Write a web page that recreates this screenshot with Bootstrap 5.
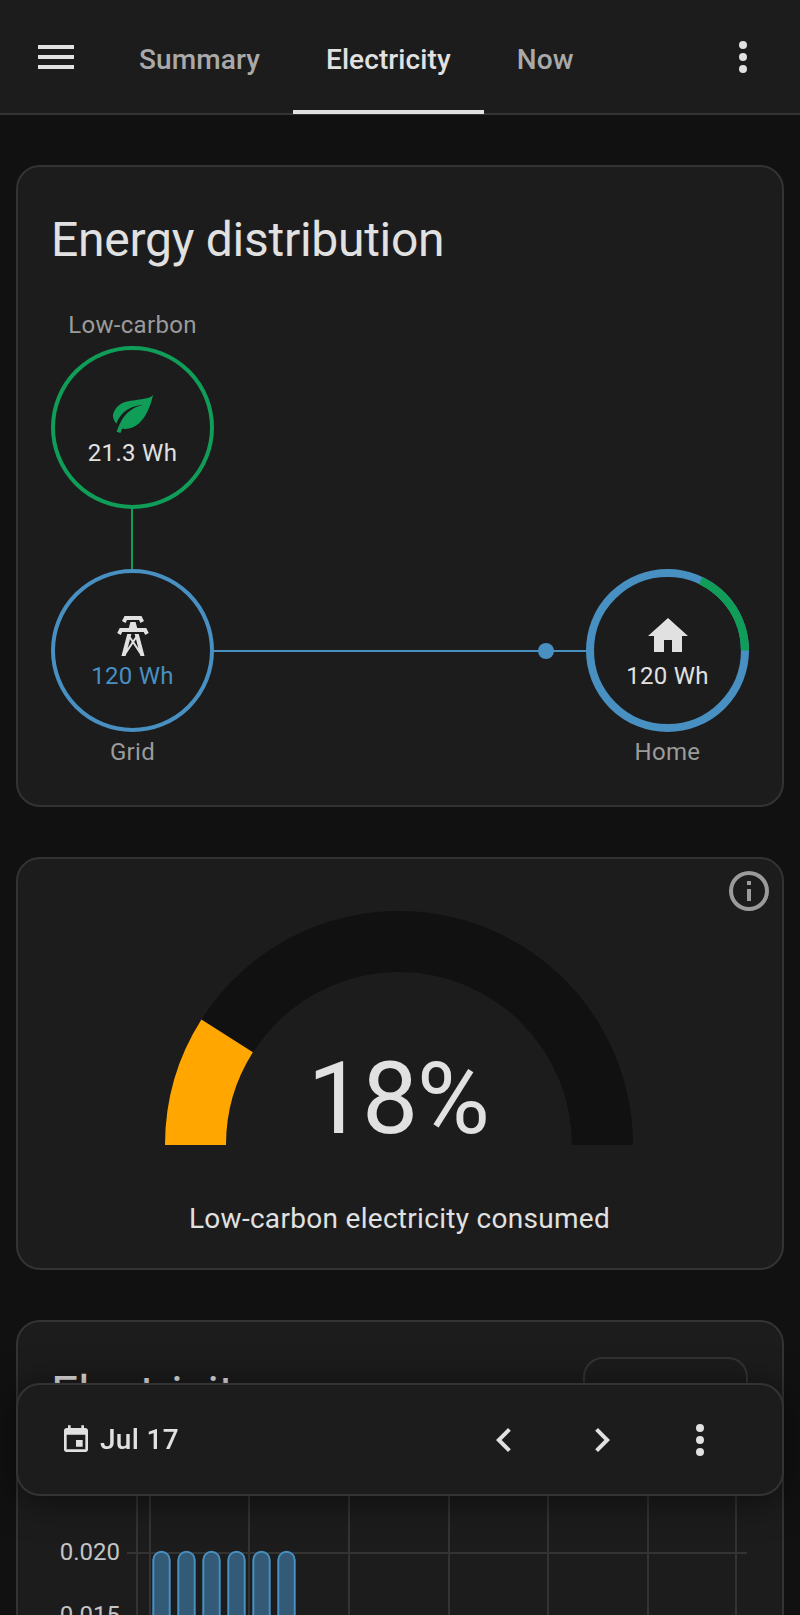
<!DOCTYPE html>
<html lang="en">
<head>
    <meta charset="UTF-8">
    <title>Energy</title>
    <link href="https://cdn.jsdelivr.net/npm/bootstrap@5.3.3/dist/css/bootstrap.min.css" rel="stylesheet">
    <script src="https://cdn.jsdelivr.net/npm/bootstrap@5.3.3/dist/js/bootstrap.bundle.min.js"></script>
    <style>
        html, body {
            height: 1615px;
            overflow: hidden;
        }
        body {
            background: #111111;
            color: #e1e1e1;
            font-family: Roboto, "Liberation Sans", sans-serif;
            font-size: 24px;
            letter-spacing: 0.3px;
        }
        .top-bar {
            height: 115px;
            background: #1c1c1c;
            border-bottom: 2px solid #333333;
        }
        .icon-btn {
            width: 48px;
            height: 48px;
            padding: 0;
            border: 0;
            flex: none;
            color: #e1e1e1;
            background: none;
        }
        .icon-btn svg, .ha-icon {
            display: block;
            width: 48px;
            height: 48px;
            fill: currentColor;
        }
        .menu-btn { margin-left: 32px; margin-right: 26px; }
        .more-btn { margin-right: 33px; }
        .tab-link {
            padding: 10px 33px 0;
            height: 115px;
            color: #a9a9a9;
            font-size: 28px;
            font-weight: 500;
            letter-spacing: 0.1px;
            border-bottom: 4px solid transparent;
        }
        .tab-link.is-active {
            color: #e1e1e1;
            border-bottom-color: #e1e1e1;
        }
        .page-body {
            padding: 50px 16px 0;
            gap: 50px;
        }
        .ha-card {
            background: #1c1c1c;
            border: 2px solid #333333;
            border-radius: 24px;
            color: #e1e1e1;
        }
        .card-heading {
            margin: 0;
            font-size: 48px;
            font-weight: 400;
            line-height: 64px;
            letter-spacing: -0.27px;
        }
        .dist-card {
            height: 642px;
            padding: 41px 33px 0;
        }
        .dist-title { margin-bottom: 37px; }
        .node-col { width: 163px; }
        .node-label {
            height: 32px;
            line-height: 32px;
            color: #9b9b9b;
            text-align: center;
            white-space: nowrap;
        }
        .node {
            position: relative;
            width: 163px;
            height: 163px;
            flex: none;
            padding-top: 43px;
            border-radius: 50%;
            line-height: 32px;
        }
        .node-low { border: 4px solid #0f9d58; padding-top: 39px; margin-top: 5px; }
        .node-grid { border: 4px solid #488fc2; padding-top: 39px; }
        .leaf-ic { color: #0f9d58; }
        .grid-val { color: #488fc2; }
        .home-ring {
            position: absolute;
            left: 0;
            top: 0;
            width: 163px;
            height: 163px;
        }
        .low-link {
            width: 2px;
            height: 60px;
            margin-right: 1px;
            background: #0f9d58;
        }
        .grid-link {
            position: relative;
            height: 2px;
            background: #488fc2;
        }
        .flow-dot {
            position: absolute;
            left: 324px;
            top: -7px;
            width: 16px;
            height: 16px;
            border-radius: 50%;
            background: #488fc2;
        }
        .bottom-labels { margin-top: 4px; }
        .gauge-card {
            position: relative;
            height: 413px;
            padding-top: 52px;
        }
        .info-btn {
            position: absolute;
            top: 8px;
            right: 9px;
            color: #9b9b9b;
        }
        .gauge-svg {
            display: block;
            width: 468px;
            height: 264px;
            margin-left: 147px;
        }
        .gauge-value {
            font-size: 100px;
            font-weight: 400;
            letter-spacing: -1.5px;
            fill: #e1e1e1;
        }
        .gauge-name {
            margin-top: 24px;
            padding-right: 1px;
            font-size: 28px;
            line-height: 40px;
            text-align: center;
        }
        .chart-card {
            height: 500px;
            padding-top: 40px;
        }
        .chart-head { padding: 0 34px 0 33px; }
        .range-btn {
            width: 165px;
            height: 72px;
            margin-top: -5px;
            border: 2px solid #333333;
            border-radius: 20px;
            color: #e1e1e1;
            font-size: 28px;
            text-align: center;
            line-height: 74px;
        }
        .chart-svg {
            display: block;
            width: 764px;
            height: 300px;
            margin-top: 1px;
        }
        .grid-line { stroke: #333333; stroke-width: 2; }
        .bar-rect { fill: #335a76; stroke: #488fc2; stroke-width: 2; }
        .axis-text { font-size: 24px; letter-spacing: 0; fill: #c4c4c4; text-anchor: end; }
        .date-bar {
            position: fixed;
            left: 16px;
            right: 16px;
            top: 1383px;
            height: 113px;
            padding: 0 58px 0 42px;
            background: #1c1c1c;
            border: 2px solid #333333;
            border-radius: 24px;
            box-shadow: 0 4px 36px rgba(0, 0, 0, 0.55);
        }
        .date-icon {
            display: block;
            width: 32px;
            height: 32px;
            margin-right: 8px;
            fill: #e1e1e1;
        }
        .date-text {
            font-size: 28px;
            font-weight: 500;
        }
        .step-btn { margin-left: 50px; }
    </style>
</head>
<body>

<!-- 상단 탭 -->
<nav class="top-bar d-flex align-items-center">
    <button class="btn icon-btn menu-btn" aria-label="Menu">
        <svg viewBox="0 0 24 24"><path d="M3,6H21V8H3V6M3,11H21V13H3V11M3,16H21V18H3V16Z"/></svg>
    </button>
    <a class="nav-link tab-link d-flex align-items-center" href="#">Summary</a>
    <a class="nav-link tab-link is-active d-flex align-items-center" href="#">Electricity</a>
    <a class="nav-link tab-link d-flex align-items-center" href="#">Now</a>
    <button class="btn icon-btn more-btn ms-auto" aria-label="More">
        <svg viewBox="0 0 24 24"><path d="M12,16A2,2 0 0,1 14,18A2,2 0 0,1 12,20A2,2 0 0,1 10,18A2,2 0 0,1 12,16M12,10A2,2 0 0,1 14,12A2,2 0 0,1 12,14A2,2 0 0,1 10,12A2,2 0 0,1 12,10M12,4A2,2 0 0,1 14,6A2,2 0 0,1 12,8A2,2 0 0,1 10,6A2,2 0 0,1 12,4Z"/></svg>
    </button>
</nav>

<main class="page-body d-flex flex-column">

    <!-- Energy distribution -->
    <section class="card ha-card dist-card">
        <h2 class="card-heading dist-title">Energy distribution</h2>

        <div class="node-col d-flex flex-column align-items-center">
            <div class="node-label">Low-carbon</div>
            <div class="node node-low d-flex flex-column align-items-center">
                <svg class="ha-icon leaf-ic" viewBox="0 0 24 24"><path d="M17,8C8,10 5.9,16.17 3.82,21.34L5.71,22L6.66,19.7C7.14,19.87 7.64,20 8,20C19,20 22,3 22,3C21,5 14,5.25 9,6.25C4,7.25 2,11.5 2,13.5C2,15.5 3.75,17.25 3.75,17.25C7,8 17,8 17,8Z"/></svg>
                <span>21.3 Wh</span>
            </div>
            <div class="low-link"></div>
        </div>

        <div class="d-flex align-items-center">
            <div class="node node-grid d-flex flex-column align-items-center">
                <svg class="ha-icon" viewBox="0 0 24 24"><path d="M8.28,5.45L6.5,4.55L7.76,2H16.23L17.5,4.55L15.72,5.44L15,4H9L8.28,5.45M18.62,8H14.09L13.3,5H10.7L9.91,8H5.38L4.1,10.55L5.89,11.44L6.62,10H17.38L18.1,11.45L19.89,10.56L18.62,8M17.77,22H15.7L15.46,21.1L12,15.9L8.53,21.1L8.3,22H6.23L9.12,11H11.19L10.83,12.35L12,14.1L13.16,12.35L12.81,11H14.88L17.77,22M11.4,15L10.5,13.65L9.32,18.13L11.4,15M14.68,18.12L13.5,13.64L12.6,15L14.68,18.12Z"/></svg>
                <span class="grid-val">120 Wh</span>
            </div>
            <div class="grid-link flex-grow-1"><span class="flow-dot"></span></div>
            <div class="node d-flex flex-column align-items-center">
                <svg class="home-ring" viewBox="0 0 162 162" fill="none" stroke-width="8">
                    <circle cx="81" cy="81" r="77" stroke="#488fc2"/>
                    <path d="M114.15,11.5A77,77 0 0 1 158,81" stroke="#0f9d58"/>
                </svg>
                <svg class="ha-icon" viewBox="0 0 24 24"><path d="M10,20V14H14V20H19V12H22L12,3L2,12H5V20H10Z"/></svg>
                <span>120 Wh</span>
            </div>
        </div>

        <div class="bottom-labels d-flex justify-content-between">
            <div class="node-col node-label">Grid</div>
            <div class="node-col node-label">Home</div>
        </div>
    </section>

    <!-- 게이지 -->
    <section class="card ha-card gauge-card">
        <button class="btn icon-btn info-btn" aria-label="Info">
            <svg viewBox="0 0 24 24"><path d="M11,9H13V7H11M12,20C7.59,20 4,16.41 4,12C4,7.59 7.59,4 12,4C16.41,4 20,7.59 20,12C20,16.41 16.41,20 12,20M12,2A10,10 0 0,0 2,12A10,10 0 0,0 12,22A10,10 0 0,0 22,12A10,10 0 0,0 12,2M11,17H13V11H11V17Z"/></svg>
        </button>
        <svg class="gauge-svg" viewBox="-234 -234 468 264">
            <path d="M-234,0A234,234 0 0 1 234,0H173A173,173 0 0 0 -173,0Z" fill="#111111"/>
            <path d="M-234,0A234,234 0 0 1 -197.6,-125.4L-146.1,-92.7A173,173 0 0 0 -173,0Z" fill="#ffa600"/>
            <text class="gauge-value" x="-1" y="-12" text-anchor="middle">18%</text>
        </svg>
        <div class="gauge-name">Low-carbon electricity consumed</div>
    </section>

    <!-- Electricity 차트 -->
    <section class="card ha-card chart-card">
        <div class="chart-head d-flex justify-content-between align-items-start">
            <h2 class="card-heading">Electricity</h2>
            <div class="range-btn">Untitled</div>
        </div>
        <svg class="chart-svg" viewBox="18 1430 764 300">
            <line class="grid-line" x1="127" y1="1553" x2="747" y2="1553"/>
            <line class="grid-line" x1="127" y1="1616" x2="747" y2="1616"/>
            <line class="grid-line" x1="137" y1="1430" x2="137" y2="1730"/>
            <line class="grid-line" x1="150" y1="1430" x2="150" y2="1730"/>
            <line class="grid-line" x1="249" y1="1430" x2="249" y2="1730"/>
            <line class="grid-line" x1="349" y1="1430" x2="349" y2="1730"/>
            <line class="grid-line" x1="449" y1="1430" x2="449" y2="1730"/>
            <line class="grid-line" x1="548" y1="1430" x2="548" y2="1730"/>
            <line class="grid-line" x1="648" y1="1430" x2="648" y2="1730"/>
            <line class="grid-line" x1="736" y1="1430" x2="736" y2="1730"/>
            <rect class="bar-rect" x="153.3" y="1551.7" width="16.4" height="200" rx="8.2"/>
            <rect class="bar-rect" x="178.3" y="1551.7" width="16.4" height="200" rx="8.2"/>
            <rect class="bar-rect" x="203.3" y="1551.7" width="16.4" height="200" rx="8.2"/>
            <rect class="bar-rect" x="228.3" y="1551.7" width="16.4" height="200" rx="8.2"/>
            <rect class="bar-rect" x="253.3" y="1551.7" width="16.4" height="200" rx="8.2"/>
            <rect class="bar-rect" x="278.3" y="1551.7" width="16.4" height="200" rx="8.2"/>
            <text class="axis-text" x="120" y="1560">0.020</text>
            <text class="axis-text" x="120" y="1623">0.015</text>
        </svg>
    </section>
</main>

<!-- 하단 날짜 바 -->
<div class="date-bar d-flex align-items-center">
    <svg class="date-icon" viewBox="0 0 24 24"><path d="M19,19H5V8H19M16,1V3H8V1H6V3H5C3.89,3 3,3.89 3,5V19A2,2 0 0,0 5,21H19A2,2 0 0,0 21,19V5C21,3.89 20.1,3 19,3H18V1M17,12H12V17H17V12Z"/></svg>
    <span class="date-text">Jul 17</span>
    <div class="d-flex ms-auto">
        <button class="btn icon-btn" aria-label="Previous">
            <svg viewBox="0 0 24 24"><path d="M15.41,16.58L10.83,12L15.41,7.41L14,6L8,12L14,18L15.41,16.58Z"/></svg>
        </button>
        <button class="btn icon-btn step-btn" aria-label="Next">
            <svg viewBox="0 0 24 24"><path d="M8.59,16.58L13.17,12L8.59,7.41L10,6L16,12L10,18L8.59,16.58Z"/></svg>
        </button>
        <button class="btn icon-btn step-btn" aria-label="More">
            <svg viewBox="0 0 24 24"><path d="M12,16A2,2 0 0,1 14,18A2,2 0 0,1 12,20A2,2 0 0,1 10,18A2,2 0 0,1 12,16M12,10A2,2 0 0,1 14,12A2,2 0 0,1 12,14A2,2 0 0,1 10,12A2,2 0 0,1 12,10M12,4A2,2 0 0,1 14,6A2,2 0 0,1 12,8A2,2 0 0,1 10,6A2,2 0 0,1 12,4Z"/></svg>
        </button>
    </div>
</div>

</body>
</html>
